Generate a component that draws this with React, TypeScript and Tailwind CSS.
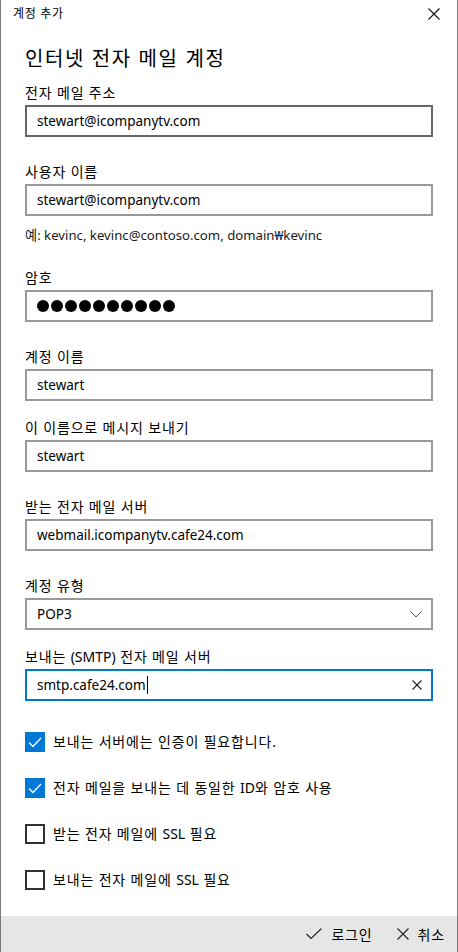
import React from "react";

const FONT = { fontFamily: '"Segoe UI", "Noto Sans", "Noto Sans CJK KR", sans-serif' };

function K({ text, wide = false }: { text: string; wide?: boolean }) {
  const parts = text.split(/([가-힣 ]+)/).filter((p) => p.length > 0);
  return (
    <>
      {parts.map((p, i) =>
        /[가-힣]/.test(p) ? (
          <span key={i} className={wide ? "tracking-[0.08em]" : "tracking-[0.06em]"}>
            {p}
          </span>
        ) : (
          <span key={i}>{p}</span>
        )
      )}
    </>
  );
}

function Field({
  label,
  value,
  mt,
  variant = "normal",
  children,
}: {
  label: string;
  value?: string;
  mt: string;
  variant?: "normal" | "hover" | "focus";
  children?: React.ReactNode;
}) {
  const border =
    variant === "hover"
      ? "border-[#666666]"
      : variant === "focus"
      ? "border-[#0078d7]"
      : "border-[#999999]";
  return (
    <div className={`flex flex-col ${mt}`}>
      <div className="h-5 leading-5 text-[14px] text-black whitespace-nowrap">
        <K text={label} />
      </div>
      <div
        className={`mt-[2px] h-[32px] border-2 ${border} flex items-center pl-[10px] pr-[8px] text-[13.5px] text-black bg-white`}
      >
        {children ?? <span>{value}</span>}
      </div>
    </div>
  );
}

function Check({ checked, label }: { checked: boolean; label: string }) {
  return (
    <div className="h-[46px] flex items-start">
      <div className="flex items-center h-5">
        {checked ? (
          <div className="w-5 h-5 bg-[#0078d7] flex items-center justify-center">
            <svg width="14" height="11" viewBox="0 0 14 11">
              <path d="M1 5.5 L5 9.5 L13 1" fill="none" stroke="white" strokeWidth="1.3" />
            </svg>
          </div>
        ) : (
          <div className="w-5 h-5 border-2 border-[#333333] bg-white" />
        )}
        <span className="ml-[8px] text-[14px] text-black leading-5 whitespace-nowrap">
          <K text={label} />
        </span>
      </div>
    </div>
  );
}

export default function App() {
  return (
    <div
      style={FONT}
      className="w-[458px] h-[952px] bg-white border-l border-r border-[#7a7a7a] flex flex-col overflow-hidden"
    >
      <div className="h-[30px] flex items-center justify-between pl-[12px] pr-[17px]">
        <span className="text-[12px] text-black">
          <K text="계정 추가" />
        </span>
        <svg width="12" height="12" viewBox="0 0 12 12">
          <path d="M0.5 0.5 L11.5 11.5 M11.5 0.5 L0.5 11.5" stroke="#111" strokeWidth="1.1" />
        </svg>
      </div>
      <div className="flex-1 flex flex-col pl-[24px] pr-[24px]">
        <div className="mt-[17px] h-[28px] leading-[28px] text-[20px] text-black whitespace-nowrap">
          <K text="인터넷 전자 메일 계정" wide />
        </div>
        <Field label="전자 메일 주소" value="stewart@icompanytv.com" mt="mt-[10px]" variant="hover" />
        <Field label="사용자 이름" value="stewart@icompanytv.com" mt="mt-[25px]" />
        <div className="mt-[9px] h-5 leading-5 text-[13.2px] text-[#1a1a1a] whitespace-nowrap">
          예: kevinc, kevinc@contoso.com, domain₩kevinc
        </div>
        <Field label="암호" mt="mt-[23px]">
          <span className="flex gap-[2px]">
            {Array.from({ length: 10 }).map((_, i) => (
              <span key={i} className="w-[12px] h-[12px] rounded-full bg-black inline-block" />
            ))}
          </span>
        </Field>
        <Field label="계정 이름" value="stewart" mt="mt-[25px]" />
        <Field label="이 이름으로 메시지 보내기" value="stewart" mt="mt-[17px]" />
        <Field label="받는 전자 메일 서버" value="webmail.icompanytv.cafe24.com" mt="mt-[25px]" />
        <Field label="계정 유형" mt="mt-[25px]">
          <span className="flex-1">POP3</span>
          <svg width="12" height="7" viewBox="0 0 12 7" className="mr-[1px]">
            <path d="M0.5 0.5 L6 6 L11.5 0.5" fill="none" stroke="#555" strokeWidth="1" />
          </svg>
        </Field>
        <Field label="보내는 (SMTP) 전자 메일 서버" mt="mt-[17px]" variant="focus">
          <span className="flex-1 flex items-center">
            smtp.cafe24.com
            <span className="inline-block w-px h-[18px] bg-black ml-px" />
          </span>
          <svg width="10" height="10" viewBox="0 0 10 10" className="mr-[1px]">
            <path d="M0.5 0.5 L9.5 9.5 M9.5 0.5 L0.5 9.5" stroke="#222" strokeWidth="1.1" />
          </svg>
        </Field>
        <div className="mt-[31px] flex flex-col">
          <Check checked label="보내는 서버에는 인증이 필요합니다." />
          <Check checked label="전자 메일을 보내는 데 동일한 ID와 암호 사용" />
          <Check checked={false} label="받는 전자 메일에 SSL 필요" />
          <Check checked={false} label="보내는 전자 메일에 SSL 필요" />
        </div>
      </div>
      <div className="h-[38px] bg-[#e6e6e6] flex items-center justify-end pr-[12px] text-[14px] text-black">
        <div className="flex items-center">
          <svg width="16" height="12" viewBox="0 0 16 12">
            <path d="M0.5 6 L5 10.5 L15.5 0.5" fill="none" stroke="#222" strokeWidth="1.1" />
          </svg>
          <span className="ml-[9px]">
            <K text="로그인" />
          </span>
        </div>
        <div className="flex items-center ml-[24px]">
          <svg width="12" height="12" viewBox="0 0 12 12">
            <path d="M0.5 0.5 L11.5 11.5 M11.5 0.5 L0.5 11.5" stroke="#222" strokeWidth="1.1" />
          </svg>
          <span className="ml-[9px]">
            <K text="취소" />
          </span>
        </div>
      </div>
    </div>
  );
}
